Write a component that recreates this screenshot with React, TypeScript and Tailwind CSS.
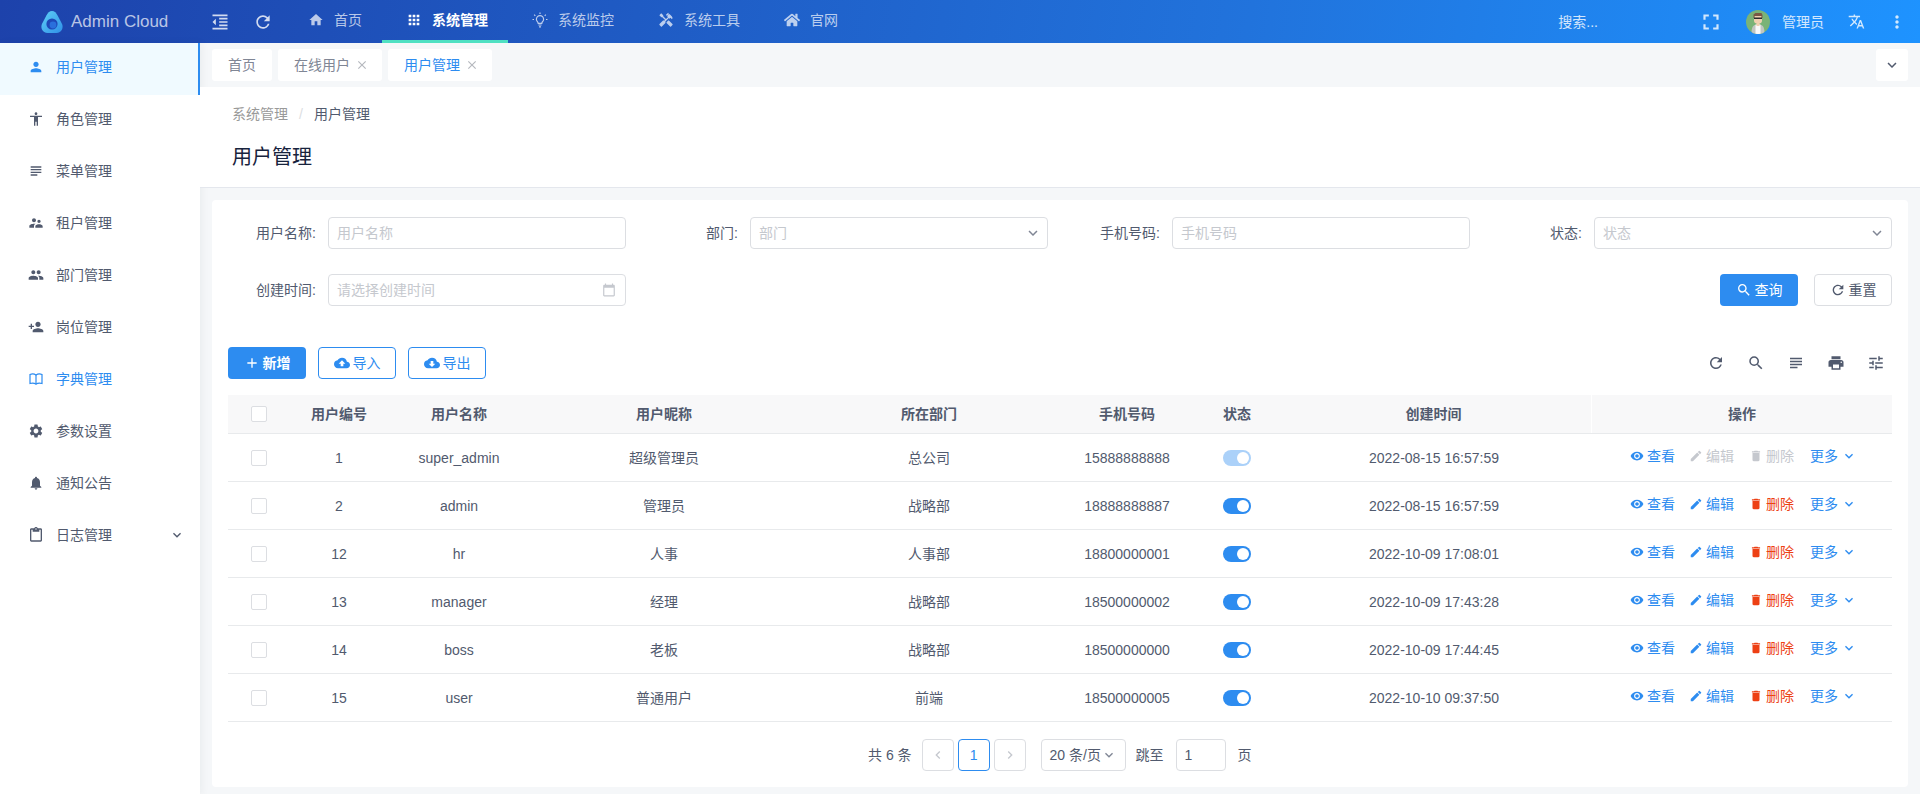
import { type ReactNode } from 'react'
import {
  MdAccessibility,
  MdAdd,
  MdApps,
  MdCalendarToday,
  MdChevronLeft,
  MdChevronRight,
  MdClose,
  MdCloudDownload,
  MdCloudUpload,
  MdDelete,
  MdEdit,
  MdFormatIndentDecrease,
  MdFullscreen,
  MdHandyman,
  MdHome,
  MdKeyboardArrowDown,
  MdMoreVert,
  MdNotifications,
  MdOutlineContentPaste,
  MdPeople,
  MdPerson,
  MdPersonAdd,
  MdPrint,
  MdRefresh,
  MdRemoveRedEye,
  MdSearch,
  MdSettings,
  MdSubject,
  MdSupervisorAccount,
  MdTranslate,
  MdTune,
} from 'react-icons/md'
import { FaHome } from 'react-icons/fa'

function BookIcon() {
  return (
    <svg width="16" height="16" viewBox="0 0 16 16" fill="none" stroke="currentColor" strokeWidth="1.200">
      <path d="M2 3.500c2-.8 4-.8 6 .5 2-1.300 4-1.300 6-.5v9c-2-.7-4-.7-6 .5-2-1.200-4-1.200-6-.5z" />
      <path d="M8 4v9.500" />
    </svg>
  )
}

const sideMenus = [
  { name: '用户管理', icon: <MdPerson />, active: true },
  { name: '角色管理', icon: <MdAccessibility /> },
  { name: '菜单管理', icon: <MdSubject /> },
  { name: '租户管理', icon: <MdSupervisorAccount /> },
  { name: '部门管理', icon: <MdPeople /> },
  { name: '岗位管理', icon: <MdPersonAdd /> },
  { name: '字典管理', icon: <BookIcon />, blue: true },
  { name: '参数设置', icon: <MdSettings /> },
  { name: '通知公告', icon: <MdNotifications /> },
  { name: '日志管理', icon: <MdOutlineContentPaste />, arrow: true },
]

const users = [
  { id: 1, name: 'super_admin', nick: '超级管理员', dept: '总公司', phone: '15888888888', time: '2022-08-15 16:57:59' },
  { id: 2, name: 'admin', nick: '管理员', dept: '战略部', phone: '18888888887', time: '2022-08-15 16:57:59' },
  { id: 12, name: 'hr', nick: '人事', dept: '人事部', phone: '18800000001', time: '2022-10-09 17:08:01' },
  { id: 13, name: 'manager', nick: '经理', dept: '战略部', phone: '18500000002', time: '2022-10-09 17:43:28' },
  { id: 14, name: 'boss', nick: '老板', dept: '战略部', phone: '18500000000', time: '2022-10-09 17:44:45' },
  { id: 15, name: 'user', nick: '普通用户', dept: '前端', phone: '18500000005', time: '2022-10-10 09:37:50' },
]

function Logo() {
  return (
    <svg width="24" height="24" viewBox="0 0 24 24">
      <defs>
        <linearGradient id="logoOuter" x1="0" y1="0" x2="1" y2="1">
          <stop offset="0" stopColor="#5fd0f7" />
          <stop offset="1" stopColor="#2f8fe8" />
        </linearGradient>
      </defs>
      <path
        d="M12 1c2.600 0 4.200 2 5.600 4.600l4.200 8c2.200 4.200-.2 9.400-5.400 9.400H7.600C2.400 23 0 17.800 2.200 13.600l4.200-8C7.800 3 9.400 1 12 1z"
        fill="url(#logoOuter)"
      />
      <circle cx="12" cy="14" r="5.600" fill="#1e49b8" />
      <circle cx="13" cy="15" r="3.400" fill="#2a6fdc" />
    </svg>
  )
}

function Avatar() {
  return (
    <svg width="24" height="24" viewBox="0 0 24 24" className="rounded-full">
      <rect width="24" height="24" fill="#7ab377" />
      <path d="M5.500 24c0-6.500 1-9.500 6.500-9.500s6.500 3 6.500 9.500z" fill="#c2c6c2" />
      <rect x="9.500" y="14.500" width="5" height="9.500" fill="#fafafa" />
      <rect x="10.500" y="11" width="3" height="5" fill="#f0d0b0" />
      <rect x="8" y="5" width="8" height="8.500" rx="3" fill="#f0d0b0" />
      <path d="M7.500 8V4.500L9.500 3h6L16.500 5v3h-1V6H8.500v2z" fill="#7a5844" />
      <rect x="8" y="7.500" width="8" height="1.500" fill="#2c2c2c" />
    </svg>
  )
}

function BulbIcon() {
  return (
    <svg width="16" height="16" viewBox="0 0 16 16" fill="none" stroke="currentColor" strokeWidth="1.200">
      <path d="M5.500 9.800a3.600 3.600 0 1 1 5 0c-.5.500-.7 1-.7 1.500H6.200c0-.5-.2-1-.7-1.500z" />
      <path d="M6.400 13h3.200M7 14.800h2" />
      <path d="M8 .5v1.500M2.200 2.700l1.100 1.100M13.800 2.700l-1.100 1.100M.5 7.500H2M14 7.500h1.500" />
    </svg>
  )
}

function NavItem({ icon, label, active }: { icon: ReactNode; label: string; active?: boolean }) {
  return (
    <div
      className={`flex h-[43px] items-center gap-[10px] border-b-[3px] pl-6 pr-5 text-sm ${
        active ? 'border-[#4fe0c2] font-bold text-white' : 'border-transparent text-white/70'
      }`}
    >
      <span className="flex w-4 justify-center text-[16px]">{icon}</span>
      {label}
    </div>
  )
}

function Tab({ label, active, closable }: { label: string; active?: boolean; closable?: boolean }) {
  return (
    <div
      className={`flex h-8 items-center gap-[5px] rounded-[3px] bg-white pl-4 text-sm ${closable ? 'pr-[13px]' : 'pr-4'} ${
        active ? 'text-[#2d8cf0]' : 'text-[#808695]'
      }`}
    >
      {label}
      {closable && <MdClose className="text-[14px] text-[#b5b8be]" />}
    </div>
  )
}

function FormItem({ label, children }: { label: string; children: ReactNode }) {
  return (
    <div className="flex items-center">
      <label className="w-[100px] pr-3 text-right text-sm text-[#515a6e]">{label}:</label>
      {children}
    </div>
  )
}

function TextInput({ placeholder, icon }: { placeholder: string; icon?: ReactNode }) {
  return (
    <div className="flex h-8 w-[298px] items-center justify-between rounded border border-[#dcdee2] bg-white pl-2 pr-[9px] text-sm text-[#c5c8ce]">
      {placeholder}
      {icon}
    </div>
  )
}

function Check() {
  return <div className="h-4 w-4 rounded-[2px] border border-[#dcdee2] bg-white" />
}

function Switch({ disabled }: { disabled?: boolean }) {
  return (
    <div
      className={`flex h-4 w-7 shrink-0 items-center justify-end rounded-full pr-[2px] ${
        disabled ? 'bg-[#abd1f9]' : 'bg-[#2d8cf0]'
      }`}
    >
      <div className="h-3 w-3 rounded-full bg-white" />
    </div>
  )
}

const rowCols = 'grid grid-cols-[72px_78px_162px_248px_282px_114px_106px_302px_300px]'
const cell = 'flex min-w-0 items-center justify-center whitespace-nowrap'

function Row({ u, first }: { u: (typeof users)[number]; first: boolean }) {
  const off = first ? 'text-[#c5c8ce]' : 'text-[#2d8cf0]'
  const del = first ? 'text-[#c5c8ce]' : 'text-[#ed4014]'
  return (
    <div className={`${rowCols} h-12 border-b border-[#e8eaec] text-sm text-[#515a6e]`}>
      <div className="flex items-center pl-[23px]">
        <Check />
      </div>
      <div className={cell}>{u.id}</div>
      <div className={cell}>{u.name}</div>
      <div className={cell}>{u.nick}</div>
      <div className={cell}>{u.dept}</div>
      <div className={cell}>{u.phone}</div>
      <div className={cell}>
        <Switch disabled={first} />
      </div>
      <div className={`${cell} pr-[14px]`}>{u.time}</div>
      <div className="flex items-center pb-1 pl-[38px]">
        <span className="flex items-center gap-[3px] text-[#2d8cf0]">
          <MdRemoveRedEye className="text-[14px]" />
          查看
        </span>
        <span className={`ml-[14px] flex items-center gap-[3px] ${off}`}>
          <MdEdit className="text-[14px]" />
          编辑
        </span>
        <span className={`ml-[15px] flex items-center gap-[3px] ${del}`}>
          <MdDelete className="text-[14px]" />
          删除
        </span>
        <span className="ml-[16px] flex items-center gap-[3px] text-[#2d8cf0]">
          更多
          <MdKeyboardArrowDown className="text-[16px]" />
        </span>
      </div>
    </div>
  )
}

export default function App() {
  return (
    <div
      className="flex h-[794px] w-[1920px] flex-col overflow-hidden bg-[#f5f7f9] text-sm text-[#515a6e]"
      style={{ fontFamily: '"Liberation Sans", "Noto Sans CJK SC", sans-serif' }}
    >
      <header className="flex h-[43px] shrink-0 items-center bg-[linear-gradient(100deg,#1d42ab_0%,#2173dc_65%,#1e93ff_100%)] text-white/80">
        <div className="flex w-[205px] items-center gap-[7px] pl-10">
          <Logo />
          <span className="text-[17px] leading-none text-white/70">Admin Cloud</span>
        </div>
        <MdFormatIndentDecrease className="ml-[5px] text-[20px] text-white/80" />
        <MdRefresh className="ml-[23px] text-[20px] text-white/80" />
        <div className="ml-[11px] flex">
          <NavItem icon={<MdHome />} label="首页" />
          <NavItem icon={<MdApps />} label="系统管理" active />
          <NavItem icon={<BulbIcon />} label="系统监控" />
          <NavItem icon={<MdHandyman />} label="系统工具" />
          <NavItem icon={<FaHome />} label="官网" />
        </div>
        <div className="ml-auto flex items-center">
          <span className="text-sm text-white/80">搜索...</span>
          <MdFullscreen className="ml-[100px] text-[26px] text-white/80" />
          <div className="ml-[22px]">
            <Avatar />
          </div>
          <span className="ml-3 text-sm text-white/80">管理员</span>
          <MdTranslate className="ml-6 text-[17px] text-white/80" />
          <MdMoreVert className="ml-[22px] mr-[13px] text-[20px] text-white/80" />
        </div>
      </header>

      <div className="flex min-h-0 flex-1">
        <aside className="w-[200px] shrink-0 bg-white shadow-[2px_0_8px_rgba(29,35,41,0.05)]">
          {sideMenus.map(m => (
            <div
              key={m.name}
              className={`flex h-[52px] items-center pb-1 pl-7 pr-[15px] text-sm ${
                m.active ? 'border-r-2 border-[#2d8cf0] bg-[#f0faff] text-[#2d8cf0]' : m.blue ? 'text-[#2d8cf0]' : 'text-[#515a6e]'
              }`}
            >
              <span className="mr-3 text-[16px]">{m.icon}</span>
              <span className="flex-1">{m.name}</span>
              {m.arrow && <MdKeyboardArrowDown className="text-[16px]" />}
            </div>
          ))}
        </aside>

        <main className="min-w-0 flex-1">
          <div className="flex h-11 items-start justify-between pl-3 pr-3 pt-[6px]">
            <div className="flex gap-[6px]">
              <Tab label="首页" />
              <Tab label="在线用户" closable />
              <Tab label="用户管理" active closable />
            </div>
            <div className="flex h-8 w-8 items-center justify-center rounded-[3px] bg-white">
              <MdKeyboardArrowDown className="text-[18px] text-[#515a6e]" />
            </div>
          </div>

          <div className="h-[101px] border-b border-[#e4e7ed] bg-white pl-8 pt-[17px]">
            <div className="flex h-[20px] items-center text-sm">
              <span className="text-[#999]">系统管理</span>
              <span className="mx-[11px] text-[#dcdee2]">/</span>
              <span className="text-[#515a6e]">用户管理</span>
            </div>
            <h1 className="mt-[18px] text-[20px] font-normal leading-[30px] text-[#17233d]">用户管理</h1>
          </div>

          <div className="ml-3 mr-3 mt-3 h-[587px] rounded bg-white px-4 pt-[17px]">
            <div className="grid grid-cols-[repeat(4,398px)] justify-between">
              <FormItem label="用户名称">
                <TextInput placeholder="用户名称" />
              </FormItem>
              <FormItem label="部门">
                <TextInput placeholder="部门" icon={<MdKeyboardArrowDown className="-mr-1 text-[18px] text-[#808695]" />} />
              </FormItem>
              <FormItem label="手机号码">
                <TextInput placeholder="手机号码" />
              </FormItem>
              <FormItem label="状态">
                <TextInput placeholder="状态" icon={<MdKeyboardArrowDown className="-mr-1 text-[18px] text-[#808695]" />} />
              </FormItem>
            </div>

            <div className="mt-[25px] flex items-center justify-between">
              <FormItem label="创建时间">
                <TextInput placeholder="请选择创建时间" icon={<MdCalendarToday className="text-[14px] text-[#c5c8ce]" />} />
              </FormItem>
              <div className="flex gap-4">
                <button className="flex h-8 w-[78px] items-center justify-center gap-[3px] rounded bg-[#2d8cf0] text-white">
                  <MdSearch className="text-[16px]" />
                  查询
                </button>
                <button className="flex h-8 w-[78px] items-center justify-center gap-[3px] rounded border border-[#dcdee2] bg-white text-[#515a6e]">
                  <MdRefresh className="text-[16px]" />
                  重置
                </button>
              </div>
            </div>

            <div className="mt-[41px] flex items-center justify-between">
              <div className="flex gap-3">
                <button className="flex h-8 w-[78px] items-center justify-center gap-[3px] rounded bg-[#2d8cf0] font-bold text-white">
                  <MdAdd className="text-[16px]" />
                  新增
                </button>
                <button className="flex h-8 w-[78px] items-center justify-center gap-[3px] rounded border border-[#2d8cf0] bg-white text-[#2d8cf0]">
                  <MdCloudUpload className="text-[16px]" />
                  导入
                </button>
                <button className="flex h-8 w-[78px] items-center justify-center gap-[3px] rounded border border-[#2d8cf0] bg-white text-[#2d8cf0]">
                  <MdCloudDownload className="text-[16px]" />
                  导出
                </button>
              </div>
              <div className="flex items-center gap-[22px] pr-[7px] text-[18px] text-[#515a6e]">
                <MdRefresh />
                <MdSearch />
                <MdSubject />
                <MdPrint />
                <MdTune />
              </div>
            </div>

            <div className="mt-4">
              <div className={`${rowCols} h-[39px] border-b border-[#e8eaec] bg-[#f8f8f9] text-sm font-bold text-[#515a6e]`}>
                <div className="flex items-center pl-[23px]">
                  <Check />
                </div>
                <div className={cell}>用户编号</div>
                <div className={cell}>用户名称</div>
                <div className={cell}>用户昵称</div>
                <div className={cell}>所在部门</div>
                <div className={cell}>手机号码</div>
                <div className={cell}>状态</div>
                <div className={`${cell} border-r border-white pr-[14px]`}>创建时间</div>
                <div className={cell}>操作</div>
              </div>
              {users.map((u, i) => (
                <Row key={u.id} u={u} first={i === 0} />
              ))}
            </div>

            <div className="mt-[17px] flex h-8 items-center pl-[640px] text-sm">
              <span className="text-[#515a6e]">共 6 条</span>
              <div className="ml-[10px] flex h-8 w-8 items-center justify-center rounded border border-[#dcdee2] text-[#c5c8ce]">
                <MdChevronLeft className="text-[16px]" />
              </div>
              <div className="ml-1 flex h-8 w-8 items-center justify-center rounded border border-[#2d8cf0] text-[#2d8cf0]">1</div>
              <div className="ml-1 flex h-8 w-8 items-center justify-center rounded border border-[#dcdee2] text-[#c5c8ce]">
                <MdChevronRight className="text-[16px]" />
              </div>
              <div className="ml-[15px] flex h-8 w-[85px] items-center rounded border border-[#dcdee2] pl-2 pr-1">
                20 条/页
                <MdKeyboardArrowDown className="text-[16px] text-[#808695]" />
              </div>
              <span className="ml-[10px]">跳至</span>
              <div className="ml-3 flex h-8 w-[50px] items-center rounded border border-[#dcdee2] pl-2">1</div>
              <span className="ml-3">页</span>
            </div>
          </div>
        </main>
      </div>
    </div>
  )
}
